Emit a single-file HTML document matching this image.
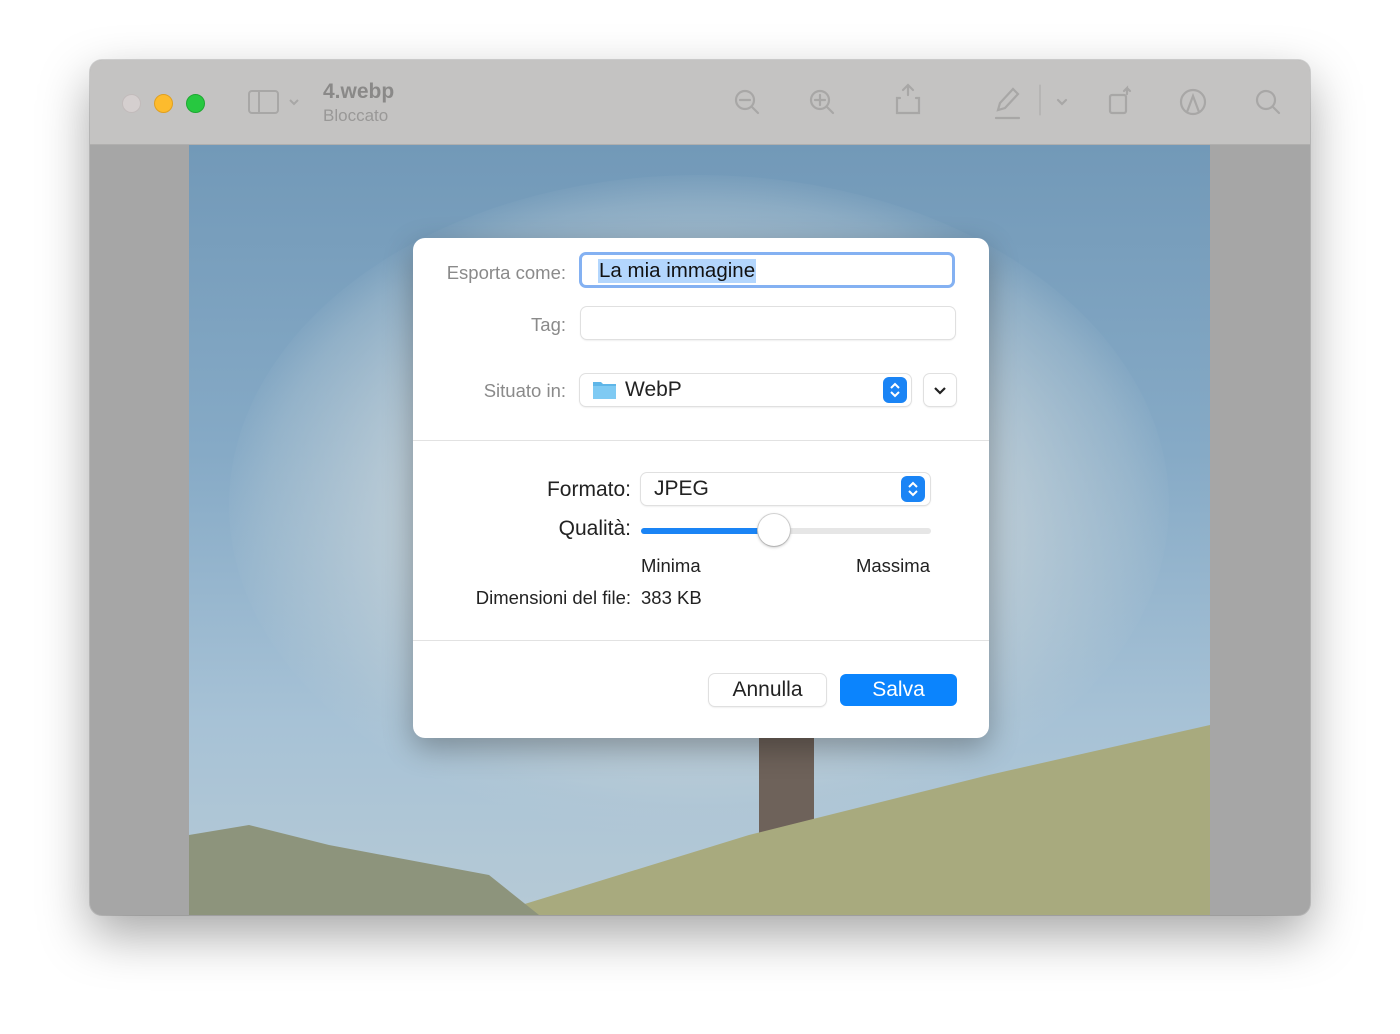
<!DOCTYPE html>
<html><head><style>
body{margin:0;width:1400px;height:1034px;background:#fff;position:relative;overflow:hidden;font-family:"Liberation Sans",sans-serif}
.win{position:absolute;left:90px;top:60px;width:1220px;height:855px;border-radius:12px;overflow:hidden;background:#a6a6a6;box-shadow:0 20px 50px rgba(0,0,0,.35),0 0 0 1px rgba(0,0,0,.15)}
.tb{position:absolute;left:0;top:0;width:1220px;height:84px;background:#c4c3c2;border-bottom:1px solid #b0afae}
.dot{position:absolute;top:34px;width:18px;height:18px;border-radius:50%}
.img{position:absolute;left:99px;top:85px;width:1021px;height:770px;overflow:hidden;background:linear-gradient(180deg,#7299b8 0%,#86aac6 40%,#a7c2d6 75%,#b6cad6 100%)}
.dlg{position:absolute;left:413px;top:238px;width:576px;height:500px;background:#fff;border-radius:12px;box-shadow:0 10px 30px rgba(0,0,0,.3)}
.lbl{position:absolute;text-align:right;color:#8a8a8a;font-size:18.5px}
.dk{position:absolute;color:#222;font-size:21px}
.field{position:absolute;background:#fff;border-radius:6px;box-shadow:0 0 0 1px #e0e0e0,0 1px 2px rgba(0,0,0,.15)}
.step{position:absolute;width:24px;height:26px;border-radius:6px;background:#1a84f5}
</style></head><body>
<div class="win">
 <div class="tb">
  <div class="dot" style="left:32px;background:#d5cfcf;border:1px solid #c2bbbb;width:17px;height:17px"></div>
  <div class="dot" style="left:64px;background:#fdbb2d;border:1px solid #e0a020;width:17px;height:17px"></div>
  <div class="dot" style="left:96px;background:#27c840;border:1px solid #1ea832;width:17px;height:17px"></div>
  <svg style="position:absolute;left:150px;top:25px" width="70" height="36" viewBox="0 0 70 36"><g fill="none" stroke="#a8a7a6" stroke-width="2"><rect x="9" y="6" width="29" height="22" rx="3"/><line x1="19" y1="6" x2="19" y2="28"/><path d="M50 15l4 4 4-4"/></g></svg>
  <div style="position:absolute;left:233px;top:20px;font-size:21px;font-weight:bold;color:#8a8988">4.webp</div>
  <div style="position:absolute;left:233px;top:46px;font-size:17px;color:#999897">Bloccato</div>
  <svg style="position:absolute;left:546px;top:20px" width="700" height="45" viewBox="630 20 700 45"><g fill="none" stroke="#a8a7a6" stroke-width="2.2" stroke-linecap="round">
   <circle cx="739" cy="40" r="9"/><path d="M734 40h10M746 47l6 6"/>
   <circle cx="814" cy="40" r="9"/><path d="M809 40h10M814 35v10M821 47l6 6"/>
   <path d="M902 35v-10M897 30l5-5 5 5M894 38h-3v15h22v-15h-3"/>
   <path d="M992 50l2-7 13-14 5 5-13 14z M990 58h23"/>
   <path d="M1034 25v30" stroke-width="1"/><path d="M1052 40l4 4 4-4"/>
   <rect x="1104" y="35" width="16" height="18" rx="2"/><path d="M1121 34v-6l-3 3M1121 28l3 3"/>
   <circle cx="1187" cy="42" r="12"/><path d="M1181 52l6-16 6 16"/>
   <circle cx="1260" cy="40" r="9"/><path d="M1267 47l6 6"/></g></svg>
 </div>
 <div class="img">
  <div style="position:absolute;left:40px;top:30px;width:940px;height:660px;border-radius:50%;background:radial-gradient(ellipse at center,rgba(215,222,225,.9) 0%,rgba(200,212,218,.75) 45%,rgba(180,200,212,.35) 65%,rgba(0,0,0,0) 72%)"></div>
  <div style="position:absolute;left:570px;top:590px;width:55px;height:180px;background:#6e625a"></div>
  <svg style="position:absolute;left:0;top:0" width="1021" height="770"><polygon points="300,770 560,690 800,630 1021,580 1021,770" fill="#a8aa7e"/><polygon points="0,690 60,680 140,700 300,730 350,770 0,770" fill="#8d947c"/></svg>
 </div>
</div>
<div class="dlg">
 <div class="lbl" style="left:0;width:153px;top:24px">Esporta come:</div>
 <div style="position:absolute;left:166px;top:14px;width:376px;height:36px;border-radius:7px;border:3px solid #84b1f2;box-sizing:border-box;background:#fff"></div>
 <div style="position:absolute;left:185px;top:21px;background:#b3d6fd;color:#111;font-size:20.5px;padding:0 1px;line-height:24px">La mia immagine</div>
 <div class="lbl" style="left:0;width:153px;top:76px">Tag:</div>
 <div class="field" style="left:168px;top:69px;width:374px;height:32px"></div>
 <div class="lbl" style="left:0;width:153px;top:142px">Situato in:</div>
 <div class="field" style="left:167px;top:136px;width:331px;height:32px"></div>
 <svg style="position:absolute;left:179px;top:141px" width="26" height="22"><path d="M1 3h8l2 2h13v15H1z" fill="#5fb6e8"/><rect x="1" y="7" width="23" height="13" fill="#7fcaf3"/></svg>
 <div class="dk" style="left:212px;top:140px;font-size:21px">WebP</div>
 <div class="step" style="left:470px;top:139px"></div>
 <svg style="position:absolute;left:470px;top:139px" width="24" height="26"><path d="M8 11l4-4 4 4M8 15l4 4 4-4" fill="none" stroke="#fff" stroke-width="2"/></svg>
 <div class="field" style="left:511px;top:136px;width:32px;height:32px"></div>
 <svg style="position:absolute;left:511px;top:136px" width="32" height="32"><path d="M11 14l5 5 5-5" fill="none" stroke="#222" stroke-width="2.2"/></svg>
 <div style="position:absolute;left:0;top:202px;width:576px;height:1px;background:#e2e2e2"></div>
 <div class="dk" style="left:0;width:218px;text-align:right;top:240px">Formato:</div>
 <div class="field" style="left:228px;top:235px;width:289px;height:32px"></div>
 <div class="dk" style="left:241px;top:239px;font-size:21px">JPEG</div>
 <div class="step" style="left:488px;top:238px"></div>
 <svg style="position:absolute;left:488px;top:238px" width="24" height="26"><path d="M8 11l4-4 4 4M8 15l4 4 4-4" fill="none" stroke="#fff" stroke-width="2"/></svg>
 <div class="dk" style="left:0;width:218px;text-align:right;top:279px">Qualità:</div>
 <div style="position:absolute;left:228px;top:290px;width:290px;height:6px;border-radius:3px;background:#e6e6e6"></div>
 <div style="position:absolute;left:228px;top:290px;width:135px;height:6px;border-radius:3px;background:#1a84f5"></div>
 <div style="position:absolute;left:345px;top:276px;width:32px;height:32px;border-radius:50%;background:#fff;box-shadow:0 1px 3px rgba(0,0,0,.3),0 0 0 1px #ddd"></div>
 <div class="dk" style="left:228px;top:317px;font-size:18.5px">Minima</div>
 <div class="dk" style="left:407px;width:110px;text-align:right;top:317px;font-size:18.5px">Massima</div>
 <div class="dk" style="left:0;width:218px;text-align:right;top:349px;font-size:18.5px">Dimensioni del file:</div>
 <div class="dk" style="left:228px;top:349px;font-size:18.5px">383 KB</div>
 <div style="position:absolute;left:0;top:402px;width:576px;height:1px;background:#e2e2e2"></div>
 <div class="field" style="left:296px;top:436px;width:117px;height:32px;text-align:center;line-height:32px;font-size:21px;color:#222">Annulla</div>
 <div style="position:absolute;left:427px;top:436px;width:117px;height:32px;border-radius:6px;background:#0b84fd;text-align:center;line-height:32px;font-size:21px;color:#fff">Salva</div>
</div>
</body></html>
